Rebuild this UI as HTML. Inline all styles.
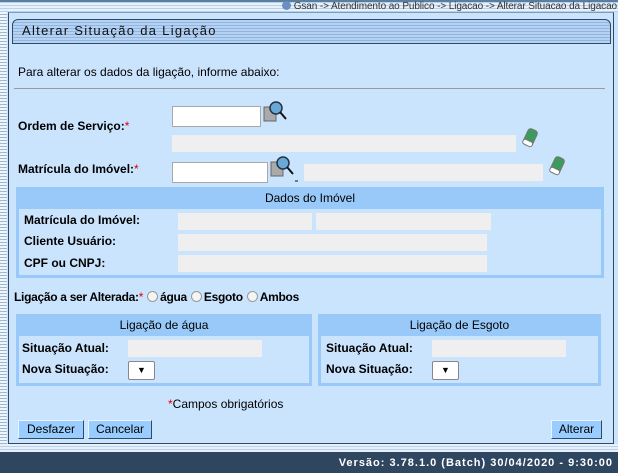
<!DOCTYPE html>
<html><head><meta charset="utf-8"><style>
*{margin:0;padding:0;box-sizing:border-box}
body{width:618px;height:473px;overflow:hidden;position:relative;background:#cbe4fd;font-family:"Liberation Sans",Arial,sans-serif;font-size:12px;color:#000}
.a{position:absolute}
.stripe{background:repeating-linear-gradient(180deg,#e8f1fb 0 2px,#b9d2ec 2px 3px)}
.vstripe{background:repeating-linear-gradient(180deg,#eef5fc 0 2px,#9fb7cf 2px 3px)}
.b{font-weight:bold}
.g{background:#efefef;position:absolute}
.in{background:#fff;border:1px solid #a9a9a9;position:absolute}
.box{position:absolute;background:#99c9f9}
.box .h{height:22px;line-height:22px;text-align:center;font-size:12px;color:#000}
.box .c{position:absolute;left:3px;right:3px;bottom:3px;background:#cbe4fd}
.btn{position:absolute;height:19px;background:#99ccff;border:1px solid #2f4a62;border-top-color:#eaf4ff;border-left-color:#eaf4ff;font-size:12px;line-height:17px;text-align:center}
.sel{position:absolute;background:#fff;border:1px solid #888;border-radius:2px;font-size:9px;text-align:center;line-height:17px}
.rad{display:inline-block;width:11px;height:11px;border-radius:50%;border:1px solid #999;background:#f4f4f4;vertical-align:-1px;margin:0 2px 0 4px}
</style></head><body>
<div class="a stripe" style="left:0;top:0;width:618px;height:12px"></div>
<div class="a" style="left:0;top:0;width:618px;height:2px;background:#5a7da0"></div>
<div class="a vstripe" style="left:0;top:12px;width:7px;height:438px"></div>
<div class="a" style="right:1px;top:1px;font-size:10px;color:#333;line-height:10px;letter-spacing:-0.1px"><span style="display:inline-block;width:9px;height:9px;border-radius:50%;background:#6a8fc0;vertical-align:-1px"></span> Gsan -&gt; Atendimento ao Publico -&gt; Ligacao -&gt; Alterar Situacao da Ligacao</div>
<div class="a" style="left:8px;top:12px;width:606px;height:432px;border:1px solid #2f4a62;border-top-color:#7f9bb6;background:#cbe4fd"></div>
<div class="a stripe" style="left:12px;top:19px;width:599px;height:25px;border:1px solid #2f4a62;border-radius:6px 6px 0 0;background:repeating-linear-gradient(180deg,#b6d2f2 0 2px,#8fb5e0 2px 3px)"></div>
<div class="a" style="left:22px;top:23px;font-size:13px;letter-spacing:1.3px;color:#111">Alterar Situação da Ligação</div>
<div class="a" style="left:18px;top:65px">Para alterar os dados da ligação, informe abaixo:</div>
<div class="a" style="left:14px;top:88px;width:591px;height:1px;background:#9a9a9a"></div>

<div class="a b" style="left:18px;top:119px">Ordem de Serviço:<span style="color:#d00;font-weight:normal">*</span></div>
<div class="in" style="left:172px;top:106px;width:89px;height:21px"></div>
<svg class="a" style="left:263px;top:101px" width="26" height="22"><rect x="1" y="6" width="12" height="14" fill="#aaa" stroke="#666"/><circle cx="13" cy="7" r="6" fill="#6aa8d8" stroke="#234" stroke-width="1.5"/><line x1="17" y1="11" x2="23" y2="18" stroke="#111" stroke-width="2"/></svg>
<div class="g" style="left:172px;top:135px;width:344px;height:17px"></div>
<svg class="a" style="left:520px;top:127px" width="20" height="22"><g transform="rotate(25 10 11)"><rect x="5" y="2" width="10" height="17" rx="3" fill="#3c9a5c" stroke="#777"/><rect x="5" y="14" width="10" height="5" rx="2" fill="#fff" stroke="#777"/></g></svg>

<div class="a b" style="left:18px;top:162px">Matrícula do Imóvel:<span style="color:#d00;font-weight:normal">*</span></div>
<div class="in" style="left:172px;top:162px;width:96px;height:21px"></div>
<svg class="a" style="left:270px;top:156px" width="30" height="28"><rect x="1" y="6" width="12" height="14" fill="#aaa" stroke="#666"/><circle cx="13" cy="7" r="6" fill="#6aa8d8" stroke="#234" stroke-width="1.5"/><line x1="17" y1="11" x2="23" y2="18" stroke="#111" stroke-width="2"/><line x1="25" y1="25" x2="28" y2="25" stroke="#111"/></svg>
<div class="g" style="left:304px;top:164px;width:239px;height:17px"></div>
<svg class="a" style="left:547px;top:155px" width="20" height="22"><g transform="rotate(25 10 11)"><rect x="5" y="2" width="10" height="17" rx="3" fill="#3c9a5c" stroke="#777"/><rect x="5" y="14" width="10" height="5" rx="2" fill="#fff" stroke="#777"/></g></svg>

<div class="box" style="left:16px;top:187px;width:588px;height:91px"><div class="h">Dados do Imóvel</div><div class="c" style="top:22px"></div></div>
<div class="a b" style="left:24px;top:213px">Matrícula do Imóvel:</div>
<div class="g" style="left:178px;top:213px;width:134px;height:17px"></div>
<div class="g" style="left:316px;top:213px;width:175px;height:17px"></div>
<div class="a b" style="left:24px;top:234px">Cliente Usuário:</div>
<div class="g" style="left:178px;top:234px;width:309px;height:17px"></div>
<div class="a b" style="left:24px;top:256px">CPF ou CNPJ:</div>
<div class="g" style="left:178px;top:255px;width:309px;height:17px"></div>

<div class="a b" style="left:14px;top:290px;letter-spacing:-0.3px"><span>Ligação a ser Alterada:</span><span style="color:#d00;font-weight:normal">*</span><span class="rad"></span>água<span class="rad"></span>Esgoto<span class="rad"></span>Ambos</div>

<div class="box" style="left:16px;top:314px;width:296px;height:72px"><div class="h">Ligação de água</div><div class="c" style="top:22px"></div></div>
<div class="box" style="left:318px;top:314px;width:283px;height:72px"><div class="h">Ligação de Esgoto</div><div class="c" style="top:22px"></div></div>
<div class="a b" style="left:22px;top:341px">Situação Atual:</div>
<div class="g" style="left:128px;top:340px;width:134px;height:17px"></div>
<div class="a b" style="left:22px;top:362px">Nova Situação:</div>
<div class="sel" style="left:128px;top:361px;width:27px;height:19px">▼</div>
<div class="a b" style="left:326px;top:341px">Situação Atual:</div>
<div class="g" style="left:432px;top:340px;width:134px;height:17px"></div>
<div class="a b" style="left:326px;top:362px">Nova Situação:</div>
<div class="sel" style="left:432px;top:361px;width:27px;height:19px">▼</div>

<div class="a" style="left:168px;top:397px"><span style="color:#d00">*</span>Campos obrigatórios</div>
<div class="btn" style="left:18px;top:420px;width:66px">Desfazer</div>
<div class="btn" style="left:88px;top:420px;width:64px">Cancelar</div>
<div class="btn" style="left:551px;top:420px;width:51px">Alterar</div>

<div class="a stripe" style="left:0;top:444px;width:618px;height:8px"></div>
<div class="a" style="left:0;top:452px;width:618px;height:21px;background:#2e4660"></div>
<div class="a b" style="right:5px;top:456px;color:#fff;font-size:11px;letter-spacing:1px;line-height:14px">Versão: 3.78.1.0 (Batch) 30/04/2020 - 9:30:00</div>
</body></html>
